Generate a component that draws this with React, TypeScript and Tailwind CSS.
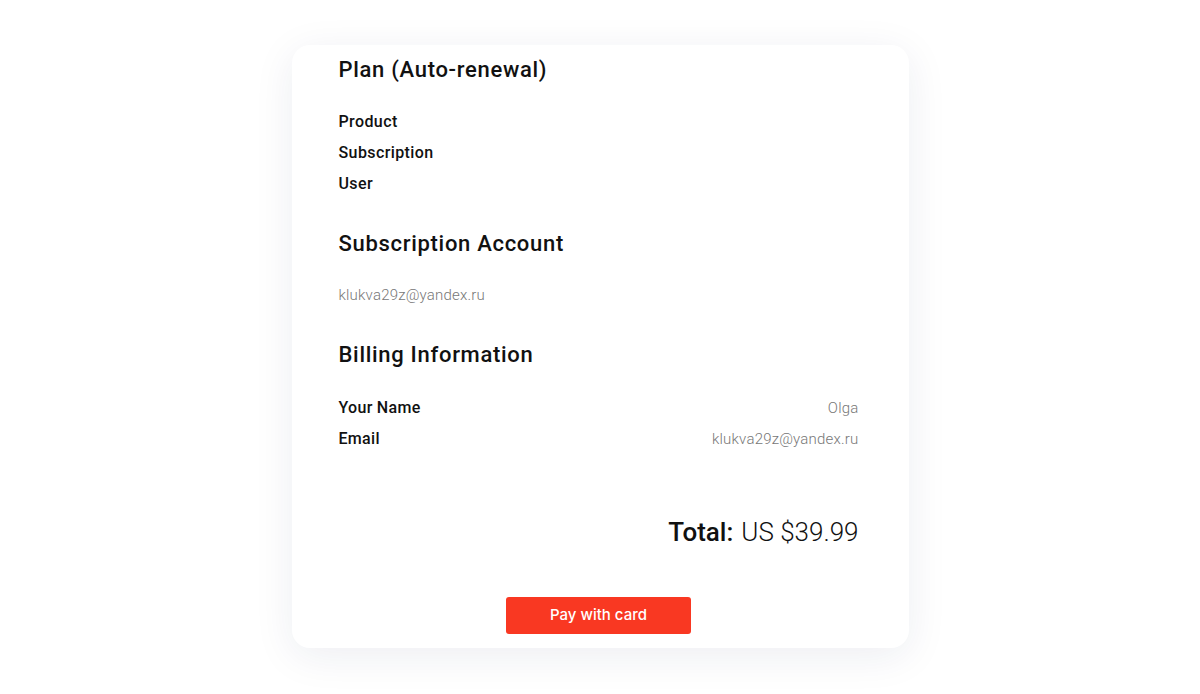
const SANS = "font-['Roboto','Liberation_Sans',sans-serif]";

const planRows = ["Product", "Subscription", "User"];

const billing = [
  { label: "Your Name", value: "Olga" },
  { label: "Email", value: "klukva29z@yandex.ru" },
];

export default function App() {
  return (
    <div className={`min-h-[694px] w-full bg-white pt-[45px] ${SANS}`}>
      <div className="mx-auto w-[617px] h-[603px] rounded-[18px] bg-white shadow-[0_8px_40px_rgba(30,40,90,0.08)] pl-[47px] pr-[50px] pt-[13px] flex flex-col">
        <h2 className="text-[22px] leading-[24px] font-medium tracking-[0.7px] text-[#111]">Plan (Auto-renewal)</h2>
        <div className="mt-[30px] flex flex-col gap-[11px]">
          {planRows.map((r) => (
            <p key={r} className="text-[16px] leading-[20px] font-medium tracking-[0.4px] text-[#111]">{r}</p>
          ))}
        </div>

        <h2 className="mt-[38px] text-[22px] leading-[24px] font-medium tracking-[0.7px] text-[#111]">Subscription Account</h2>
        <p className="mt-[30px] text-[15px] leading-[18px] font-light tracking-[0.2px] text-[#777]">klukva29z@yandex.ru</p>

        <h2 className="mt-[39px] text-[22px] leading-[24px] font-medium tracking-[0.7px] text-[#111]">Billing Information</h2>
        <div className="mt-[31px] flex flex-col gap-[11px]">
          {billing.map((b) => (
            <div key={b.label} className="flex justify-between items-center">
              <span className="text-[16px] leading-[20px] font-medium tracking-[0.3px] text-[#111]">{b.label}</span>
              <span className="text-[15px] leading-[20px] font-light tracking-[0.2px] text-[#777]">{b.value}</span>
            </div>
          ))}
        </div>

        <div className="mt-[68px] flex justify-end text-[26px] leading-[30px] text-[#111]">
          <span className="font-medium">Total:</span>
          <span className="ml-[8px] font-light">US $39.99</span>
        </div>

        <div className="mt-[50px] flex justify-center">
          <button className="w-[185px] h-[37px] rounded-[3px] bg-[#f93822] text-white text-[15px] font-medium font-['Inter',sans-serif]">
            Pay with card
          </button>
        </div>
      </div>
    </div>
  );
}
